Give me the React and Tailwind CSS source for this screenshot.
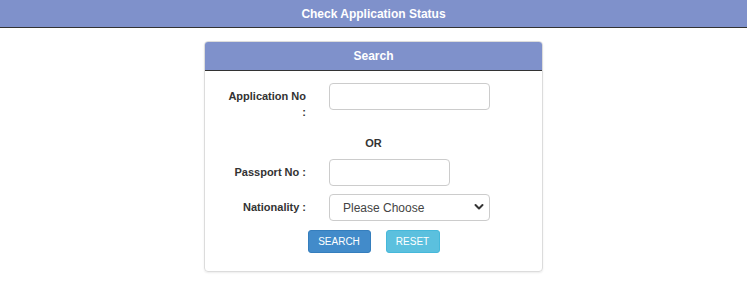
import React from 'react';

const Label = ({ children }) => (
  <label className="pt-[5px] text-right text-[11px] leading-[16px] font-bold text-[#333]">
    {children}
  </label>
);

const CheckStatus = () => {
  return (
    <div className="min-h-screen bg-white font-['Liberation_Sans',Arial,sans-serif]">
      <div className="h-[28px] bg-[#7f91cb] border-b border-[#333] flex items-center justify-center">
        <h1 className="text-white text-[12px] font-bold">Check Application Status</h1>
      </div>

      <div className="mt-[13px] mx-auto w-[339px] border border-[#dcdcdc] rounded-[4px] shadow-[0_1px_2px_rgba(0,0,0,0.08)] overflow-hidden">
        <div className="h-[29px] bg-[#7f91cb] border-b border-[#333] flex items-center justify-center">
          <span className="text-white text-[12px] font-bold">Search</span>
        </div>

        <div className="pt-[12px] pb-[18px]">
          <div className="grid grid-cols-[80px_1fr] gap-x-[23px] pl-[21px] items-start">
            <Label>Application No :</Label>
            <input
              type="text"
              className="w-[161px] h-[27px] border border-[#ccc] rounded-[4px] px-2 text-[12px] outline-none"
            />
          </div>

          <div className="mt-[15px] text-center text-[11px] leading-[16px] font-bold text-[#333]">OR</div>

          <div className="mt-[8px] grid grid-cols-[80px_1fr] gap-x-[23px] pl-[21px] items-start">
            <Label>Passport No :</Label>
            <input
              type="text"
              className="w-[121px] h-[27px] border border-[#ccc] rounded-[4px] px-2 text-[12px] outline-none"
            />
          </div>

          <div className="mt-[8px] grid grid-cols-[80px_1fr] gap-x-[23px] pl-[21px] items-start">
            <Label>Nationality :</Label>
            <div className="relative w-[161px] h-[27px]">
              <select className="appearance-none w-full h-full border border-[#ccc] rounded-[4px] bg-white pl-[13px] pr-6 text-[12px] text-[#444] outline-none">
                <option>Please Choose</option>
              </select>
              <svg
                className="absolute right-[6px] top-[9px] pointer-events-none"
                width="10"
                height="8"
                viewBox="0 0 10 8"
                fill="none"
              >
                <path d="M1.5 2 L5 5.5 L8.5 2" stroke="#333" strokeWidth="2" strokeLinecap="round" strokeLinejoin="round" />
              </svg>
            </div>
          </div>

          <div className="mt-[9px] flex justify-center gap-[15px]">
            <button className="w-[63px] h-[23px] rounded-[3px] bg-[#428bca] border border-[#357ebd] text-white text-[10px] leading-none">
              SEARCH
            </button>
            <button className="w-[54px] h-[23px] rounded-[3px] bg-[#5bc0de] border border-[#46b8da] text-white text-[10px] leading-none">
              RESET
            </button>
          </div>
        </div>
      </div>
    </div>
  );
};

export default CheckStatus;
